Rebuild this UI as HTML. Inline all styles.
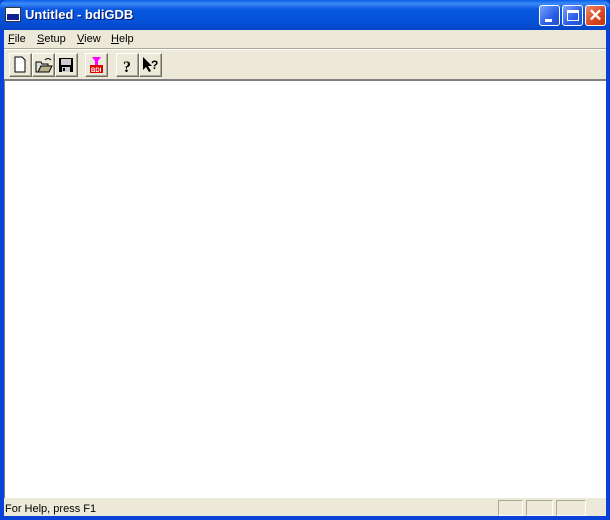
<!DOCTYPE html>
<html><head><style>
*{margin:0;padding:0;box-sizing:border-box}
body{width:610px;height:520px;overflow:hidden;background:#0842d8;font-family:Tahoma,"Liberation Sans",sans-serif;position:relative}
.title{position:absolute;left:0;top:0;width:610px;height:30px;background:linear-gradient(#0a5fe8 0%,#3d8bf8 12%,#0a58e0 30%,#0551d8 70%,#0546c8 100%);border-radius:7px 7px 0 0}
.title .t{position:absolute;left:25px;top:7px;color:#fff;font:bold 13px "Liberation Sans",sans-serif;text-shadow:1px 1px #0a1a6a}
.ico{position:absolute;left:5px;top:7px;width:16px;height:15px;background:#fff;border:1px solid #334}
.ico:after{content:"";position:absolute;left:1px;top:6px;width:12px;height:6px;background:#102090}
.btn{position:absolute;top:5px;width:21px;height:21px;border:1px solid #fff;border-radius:3px;background:linear-gradient(135deg,#7aa4f8,#2a5ee8 60%,#2050d0)}
.cls{background:linear-gradient(135deg,#f08a6a,#d8461e 60%,#c03810)}
.frame{position:absolute;left:4px;top:30px;width:602px;height:486px;background:#ece9d8}
.menu{position:absolute;left:0;top:0;height:18px;font-size:11px;font-family:"Liberation Sans",sans-serif;color:#000}
.menu span{position:absolute;top:2px}
.sep{position:absolute;left:0;top:18px;width:602px;height:2px;border-top:1px solid #aca899;border-bottom:1px solid #fff}
.tb{position:absolute;top:23px;width:23px;height:24px;border:1px solid;border-color:#fff #716f64 #716f64 #fff;background:#ece9d8;box-shadow:inset -1px -1px #aca899}
.client{position:absolute;left:0;top:49px;width:602px;height:419px;background:#fff;border-top:2px solid #808080;border-left:1px solid #808080}
.status{position:absolute;left:0;top:468px;width:602px;height:18px;font:11px "Liberation Sans",sans-serif}
.pane{position:absolute;top:2px;height:16px;border:1px solid;border-color:#aca899 #fff #fff #aca899}
</style></head><body>
<div class="title"><div class="ico"></div><div class="t">Untitled - bdiGDB</div>
<div class="btn" style="left:539px"><div style="position:absolute;left:5px;top:13px;width:7px;height:3px;background:#fff"></div></div>
<div class="btn" style="left:562px"><div style="position:absolute;left:4px;top:4px;width:12px;height:11px;border:1px solid #fff;border-top:3px solid #fff"></div></div>
<div class="btn cls" style="left:585px;color:#fff;font:bold 17px 'Liberation Sans';text-align:center;line-height:19px">✕</div>
</div>
<div class="frame">
<div class="menu"><span style="left:4px;top:3px"><u>F</u>ile</span><span style="left:33px;top:3px"><u>S</u>etup</span><span style="left:73px;top:3px"><u>V</u>iew</span><span style="left:107px;top:3px"><u>H</u>elp</span></div>
<div class="sep"></div>
<div class="tb" style="left:5px"><svg width="21" height="22"><path d="M5 3h7l3 3v12H5z" fill="#fff" stroke="#000"/></svg></div>
<div class="tb" style="left:28px"><svg width="21" height="22"><path d="M3 8h5l1 2h6v8H3z" fill="#ddd" stroke="#000"/><path d="M5 18l3-6h11l-3 6z" fill="#b8b38a" stroke="#000"/><path d="M12 6q3-3 6 0" fill="none" stroke="#000"/></svg></div>
<div class="tb" style="left:51px"><svg width="21" height="22"><rect x="3" y="4" width="14" height="14" fill="#000"/><rect x="5" y="5" width="10" height="6" fill="#ccc"/><rect x="6" y="13" width="8" height="5" fill="#ccc"/><rect x="7" y="14" width="2" height="3" fill="#000"/></svg></div>
<div class="tb" style="left:81px"><svg width="21" height="22"><path d="M6 3h9l-3 4v4H9V7z" fill="#f0f"/><rect x="4" y="11" width="13" height="8" fill="#d00"/><text x="5" y="18" font-size="6" font-weight="bold" fill="#fff" font-family="Liberation Sans">BDI</text></svg></div>
<div class="tb" style="left:112px"><svg width="21" height="22"><text x="6" y="18" font-size="16" font-weight="bold" font-family="Liberation Serif">?</text></svg></div>
<div class="tb" style="left:135px"><svg width="21" height="22"><path d="M3 3v13l3-3 3 5 2-1-3-5h4z" fill="#000"/><text x="11" y="15" font-size="12" font-weight="bold" font-family="Liberation Sans">?</text></svg></div>
<div class="client"></div>
<div class="status"><span style="position:absolute;left:1px;top:5px">For Help, press F1</span>
<div class="pane" style="left:494px;width:25px"></div><div class="pane" style="left:522px;width:27px"></div><div class="pane" style="left:552px;width:30px"></div></div>
</div>
</body></html>
